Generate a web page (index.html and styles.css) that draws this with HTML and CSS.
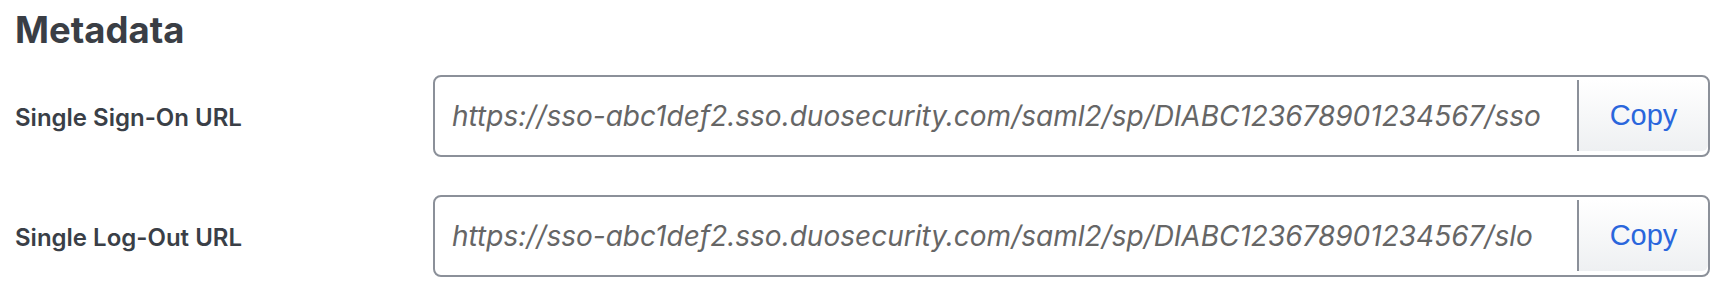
FILE: index.html
```html
<!DOCTYPE html>
<html lang="en">
<head>
<meta charset="utf-8">
<title>Metadata</title>
<link rel="stylesheet" href="styles.css">
</head>
<body>
<section class="metadata">
  <h2 class="title">Metadata</h2>
  <div class="field">
    <label class="label">Single Sign-On URL</label>
    <div class="copy-box">
      <span class="value">https://sso-abc1def2.sso.duosecurity.com/saml2/sp/DIABC123678901234567/sso</span>
      <button class="copy-btn" type="button">Copy</button>
    </div>
  </div>
  <div class="field">
    <label class="label">Single Log-Out URL</label>
    <div class="copy-box">
      <span class="value">https://sso-abc1def2.sso.duosecurity.com/saml2/sp/DIABC123678901234567/slo</span>
      <button class="copy-btn" type="button">Copy</button>
    </div>
  </div>
</section>
</body>
</html>
```

FILE: styles.css
```css
* { box-sizing: border-box; }
html, body { margin: 0; padding: 0; background: #ffffff; }
body { font-family: Inter, "Noto Sans", sans-serif; color: #3a3f46; }

.metadata {
  padding: 9px 16px 0 15px;
}

.title {
  margin: 0 0 24px 0;
  font-size: 36.5px;
  line-height: 42px;
  font-weight: 700;
  color: #3a3e45;
}

.field {
  display: flex;
  align-items: center;
  margin-bottom: 38px;
}

.field:last-child {
  margin-bottom: 0;
}

.label {
  flex: 0 0 418px;
  padding-top: 2px;
  font-size: 24px;
  font-weight: 600;
  color: #3a3f47;
}

.copy-box {
  flex: 1;
  height: 82px;
  display: flex;
  align-items: stretch;
  border: 2px solid #8b9099;
  border-radius: 8px;
  overflow: hidden;
  background: #fff;
  max-width: 1277px;
}

.value {
  flex: 1;
  display: flex;
  align-items: center;
  padding-left: 17px;
  font-size: 28px;
  font-style: italic;
  color: #666666;
  white-space: nowrap;
  overflow: hidden;
}

.copy-btn {
  flex: 0 0 131px;
  margin: 3px 0 4px 0;
  border: 0;
  border-left: 2px solid #8b9099;
  background: linear-gradient(#ffffff, #eef0f2);
  font-family: "Liberation Sans", Arial, sans-serif;
  font-size: 29px;
  color: #2a66dc;
  padding: 0;
  cursor: pointer;
  border-radius: 0 6px 6px 0;
}
```
